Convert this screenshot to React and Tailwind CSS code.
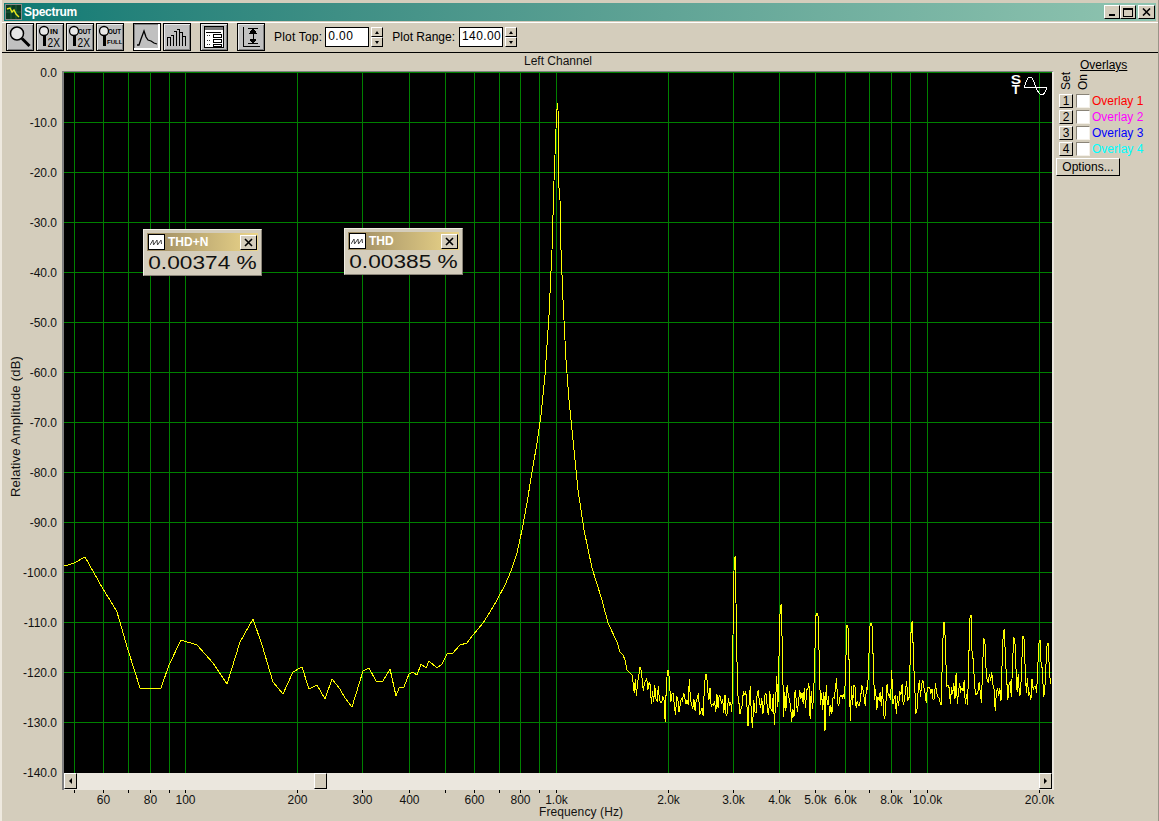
import React from "react";

const gridX = [74,103,128,150,169,185,297,362,409,445,474,499,520,539,556,668,733,779,815,845,869,891,910,927,1039];
const gridY = [72,122,172,222,272,322,372,422,472,522,572,622,672,722];
const yLabels = ["0.0","-10.0","-20.0","-30.0","-40.0","-50.0","-60.0","-70.0","-80.0","-90.0","-100.0","-110.0","-120.0","-130.0","-140.0"];
const xLabels = [[103,"60"],[150,"80"],[185,"100"],[297,"200"],[362,"300"],[409,"400"],[474,"600"],[520,"800"],[556,"1.0k"],[668,"2.0k"],[733,"3.0k"],[779,"4.0k"],[815,"5.0k"],[845,"6.0k"],[891,"8.0k"],[927,"10.0k"],[1039,"20.0k"]];

const lowTrace = [[64,565.5],[67,565.5],[75,562.5],[85,557],[103,589],[113,605],[117,612],[128,650],[140,688],[150,688],[161,688],[169,665],[181,640],[197,645],[213,663],[227,684],[240,642],[253,619],[262,645],[273,682],[283,694],[293,672],[302,667],[309,689],[317,685],[325,699],[332,679],[340,689],[345,698],[352,707],[363,671],[369,668],[376,681],[383,681],[390,669],[396,696],[399,688],[404,687],[409,674],[413,672],[417,675],[421,664],[426,668],[429,661],[437,668],[442,664],[447,654],[453,653],[460,645],[467,643],[473,635],[483,623],[490,612],[497,600],[505,585],[511,571],[517,553],[522,530],[527,503],[532,472],[537,443],[541,415],[545,375],[549,315],[552,250],[554,181],[555.5,142],[556.5,116],[557.5,103],[558,110],[558.5,140],[559,188],[560,200],[561,250],[563,300],[566,360],[569,400],[573,440],[578,490],[584,530],[592,568],[602,600],[608,623],[617,642],[620,652],[623,655],[625,660],[627,670],[632,675]];

const spikes = [[640,667],[668,668],[706,672],[735,556],[781,604],[817,613],[847,625],[871,623],[912,621],[944,620],[971,615],[984,638],[1004,629],[1014,637],[1023,636],[1040,640],[1048,643]];

function buildTrace() {
  let s = 48271;
  const rnd = () => { s = (s * 16807) % 2147483647; return s / 2147483647; };
  const pts = lowTrace.slice();
  const baseAt = (x) => {
    if (x < 668) return 684 + (x - 632) * 0.5;
    if (x < 730) return 704;
    if (x < 830) return 700;
    if (x < 960) return 698 - (x - 830) * 0.04;
    return 693 - (x - 960) * 0.05;
  };
  for (let x = 633; x < 1050.5; x += 1.15) {
    const b = baseAt(x);
    let y = b + (rnd() - 0.5) * 24;
    const r = rnd();
    if (r < 0.12) y += 8 + rnd() * 14;
    else if (r < 0.26) y -= 6 + rnd() * 12;
    for (const [sx, top] of spikes) {
      const d = Math.abs(x - sx);
      if (d < 1.2) y = Math.min(y, top + d * 3);
      else if (d < 2.4) y = Math.min(y, top + (b - top) * 0.55);
    }
    pts.push([Math.round(x * 10) / 10, Math.round(y)]);
  }
  return pts.map((p) => p.join(",")).join(" ");
}
const tracePoints = buildTrace();

const bevel = "border border-t-white border-l-white border-r-black border-b-black";

function ToolBtn({ children, pressed, className = "" }) {
  return (
    <button className={`block w-[28px] h-[28px] shrink-0 bg-[#c0c0c0] border border-black flex items-center justify-center p-0 ${pressed ? "shadow-[inset_-1px_-1px_0_#fff,inset_-2px_-2px_0_#fff,inset_1px_1px_0_#808080]" : "shadow-[inset_1px_1px_0_#e8e8e8,inset_-1px_-1px_0_#808080]"} ${className}`}>
      <svg width="26" height="26" viewBox="0 0 26 26" fill="none" stroke="#000" strokeWidth="1" shapeRendering="crispEdges">{children}</svg>
    </button>
  );
}

const smallGlass = (
  <g>
    <circle cx="7" cy="7" r="4.5" fill="#e8e8e8" stroke="#000" strokeWidth="1.3" shapeRendering="auto" />
    <rect x="6" y="11" width="3" height="11" fill="#000" stroke="none" />
  </g>
);
const tTxt = { fontFamily: "'Liberation Sans',sans-serif", stroke: "none", fill: "#000" };

function Spin() {
  return (
    <div className="w-[12px] h-[20px] flex flex-col shrink-0 ml-[2px] gap-0">
      {[0, 1].map((i) => (
        <div key={i} className="h-[10px] bg-[#d4cdbc] border-r border-b border-r-black border-b-black border-t border-l border-t-white border-l-white flex items-center justify-center">
          <div className={`w-0 h-0 border-x-[2px] border-x-transparent ${i === 0 ? "border-b-[3px] border-b-black" : "border-t-[3px] border-t-black"}`} />
        </div>
      ))}
    </div>
  );
}

function Meter({ title, value, className }) {
  return (
    <div className={`absolute w-[119px] h-[47px] bg-[#d4cdbc] border border-t-[#f0ece2] border-l-[#f0ece2] border-r-[#8a8478] border-b-[#8a8478] px-[3px] pt-[3px] ${className}`}>
      <div className="h-[18px] bg-gradient-to-r from-[#9c8a62] to-[#ecd68a] flex items-center pl-[1px] pr-[1px]">
        <div className="w-[17px] h-[16px] bg-white border border-black flex items-center justify-center shrink-0">
          <svg width="13" height="8" viewBox="0 0 13 8" fill="none" stroke="#444" strokeWidth="1"><path d="M0 7 L3 2 L3.5 7 L7 2 L7.5 7 L11 2 L11.5 6" /></svg>
        </div>
        <span className="ml-[3px] text-white font-bold text-[12px] leading-none flex-1">{title}</span>
        <div className={`w-[17px] h-[15px] bg-[#d4cdbc] ${bevel} flex items-center justify-center shrink-0`}>
          <svg width="9" height="9" viewBox="0 0 9 9" stroke="#000" strokeWidth="1.6"><path d="M1 1 L8 8 M8 1 L1 8" /></svg>
        </div>
      </div>
      <div className="text-[18px] leading-[25px] text-[#111] whitespace-nowrap pl-[1px] origin-left scale-x-[1.26]">{value}</div>
    </div>
  );
}

function OverlayRow({ n, label, color }) {
  return (
    <div className="flex items-center h-[14px] mb-[2px]">
      <button className={`w-[14px] h-[14px] p-0 bg-[#d4cdbc] ${bevel} text-[12px] leading-none flex items-center justify-center`}>{n}</button>
      <div className="ml-[3px] w-[14px] h-[14px] bg-white border border-t-[#8a8478] border-l-[#8a8478] border-r-[#f4f0e8] border-b-[#f4f0e8] shrink-0" />
      <span className={`ml-[2px] text-[12px] leading-none whitespace-nowrap ${color}`}>{label}</span>
    </div>
  );
}

export default function App() {
  return (
    <div className="w-[1159px] h-[821px] bg-[#d4cdbc] flex flex-col overflow-hidden font-['Liberation_Sans',Arial,sans-serif] text-black border-l-2 border-l-[#eee9df] border-r border-r-[#9a9488] box-border">
      {/* Title bar */}
      <div className="h-[18px] mt-[3px] ml-[2px] mr-[2px] bg-gradient-to-r from-[#0a7a74] to-[#8fc4b0] flex items-center shrink-0">
        <div className="w-[17px] h-[16px] ml-[1px] bg-[#0c3a22] border border-[#888] flex items-center justify-center">
          <svg width="15" height="14" viewBox="0 0 15 14" fill="none"><path d="M0 7 H15 M5 0 V14 M10 0 V14" stroke="#2a7a4a" strokeWidth="0.6" /><path d="M1 4 L4 3 L6 7 L8 5 L10 9 L13 12" stroke="#e8e820" strokeWidth="1.4" /></svg>
        </div>
        <span className="ml-[2px] text-white font-bold text-[12px] leading-none tracking-[-0.3px]">Spectrum</span>
        <div className="ml-auto flex items-center mr-[1px]">
          <div className={`w-[16px] h-[14px] bg-[#d4cdbc] ${bevel} flex items-end justify-center pb-[2px]`}><div className="w-[6px] h-[2px] bg-black" /></div>
          <div className={`w-[16px] h-[14px] bg-[#d4cdbc] ${bevel} flex items-center justify-center`}><div className="w-[10px] h-[9px] border border-black border-t-2" /></div>
          <div className={`ml-[2px] w-[17px] h-[14px] bg-[#d4cdbc] ${bevel} flex items-center justify-center`}>
            <svg width="9" height="8" viewBox="0 0 9 8" stroke="#000" strokeWidth="1.6"><path d="M1 0.5 L8 7.5 M8 0.5 L1 7.5" /></svg>
          </div>
        </div>
      </div>
      <div className="h-[1px] mt-[1px] bg-white shrink-0" />
      {/* Toolbar */}
      <div className="h-[29px] shrink-0 flex items-start pl-[4px] border-b border-black box-content">
        <div className="flex gap-[2px]">
          <ToolBtn>
            <circle cx="10" cy="9.5" r="6.5" fill="#e6e6e6" stroke="#000" strokeWidth="1.5" shapeRendering="auto" />
            <path d="M15 14.5 L22.5 22" stroke="#000" strokeWidth="3" shapeRendering="auto" />
          </ToolBtn>
          <ToolBtn>
            {smallGlass}
            <text x="13" y="10" fontSize="8" fontWeight="bold" style={tTxt}>IN</text>
            <text x="10.5" y="23" fontSize="12" textLength="12.5" lengthAdjust="spacingAndGlyphs" style={tTxt}>2X</text>
          </ToolBtn>
          <ToolBtn>
            {smallGlass}
            <text x="11" y="10" fontSize="7" fontWeight="bold" textLength="13" lengthAdjust="spacingAndGlyphs" style={tTxt}>OUT</text>
            <text x="10.5" y="23" fontSize="12" textLength="12.5" lengthAdjust="spacingAndGlyphs" style={tTxt}>2X</text>
          </ToolBtn>
          <ToolBtn>
            {smallGlass}
            <text x="11" y="10" fontSize="7" fontWeight="bold" textLength="13" lengthAdjust="spacingAndGlyphs" style={tTxt}>OUT</text>
            <text x="10" y="20" fontSize="6" fontWeight="bold" style={tTxt}>FULL</text>
          </ToolBtn>
        </div>
        <div className="flex gap-[2px] ml-[9px]">
          <ToolBtn pressed>
            <path d="M3 21 L5 21 L7 15 L10 7 L12 13 L14 16 L17 17 L20 19 L23 20" stroke="#000" strokeWidth="1.3" shapeRendering="auto" />
          </ToolBtn>
          <ToolBtn>
            <path d="M3.5 22 V13 H6.5 V22 M6.5 11 H9.5 V22 M9.5 7 H12.5 V22 M12.5 5 H15.5 V22 M15.5 8 H18.5 V22 M18.5 12 H21.5 V22" />
          </ToolBtn>
        </div>
        <ToolBtn className="ml-[9px]">
          <rect x="3.5" y="2.5" width="19" height="21" fill="#fff" stroke="#000" />
          <rect x="4" y="3" width="18" height="3" fill="#777" stroke="none" />
          <path d="M5 8.5 H20" />
          <rect x="12.5" y="10.5" width="8" height="3" fill="#fff" />
          <rect x="12.5" y="15.5" width="8" height="3" fill="#fff" />
          <rect x="12.5" y="20" width="8" height="2" fill="#fff" />
          <path d="M5.5 11.5 H10 M5.5 16.5 H10 M5.5 20.5 H10" stroke="#333" strokeDasharray="1 1" />
        </ToolBtn>
        <ToolBtn className="ml-[9px]">
          <path d="M5.5 3 V22 H22" strokeWidth="1" />
          <path d="M10 4.5 H20 M10 19.5 H20" />
          <path d="M15 4.5 V19.5" />
          <path d="M15 5 L12 9 H18 Z M15 19 L12 15 H18 Z" fill="#000" />
        </ToolBtn>
        <span className="ml-[9px] mt-[7px] text-[12px] leading-[14px] tracking-[0.2px] whitespace-nowrap">Plot Top:</span>
        <div className="ml-[3px] mt-[4px] w-[44px] h-[20px] bg-white border border-black text-[12px] leading-[17px] pl-[2px] tracking-[0.4px]">0.00</div>
        <div className="mt-[4px]"><Spin /></div>
        <span className="ml-[9px] mt-[7px] text-[12px] leading-[14px] whitespace-nowrap">Plot Range:</span>
        <div className="ml-[4px] mt-[4px] w-[44px] h-[20px] bg-white border border-black text-[12px] leading-[17px] pl-[2px] tracking-[0.4px]">140.00</div>
        <div className="mt-[4px]"><Spin /></div>
      </div>
      {/* Main */}
      <div className="flex flex-1 min-h-0">
        {/* Y axis */}
        <div className="w-[60px] shrink-0 flex">
          <div className="w-[21px] pl-[7px] pt-[307px]">
            <div className="[writing-mode:vertical-rl] rotate-180 text-[13px] leading-[13px] tracking-[0.23px] whitespace-nowrap h-[137px] text-[#111]">Relative Amplitude (dB)</div>
          </div>
          <div className="flex-1 flex flex-col gap-[36px] pt-[13px] items-end pr-[5px]">
            {yLabels.map((l) => (
              <div key={l} className="h-[14px] text-[12px] leading-[14px] text-[#111] whitespace-nowrap">{l}</div>
            ))}
          </div>
        </div>
        {/* Plot column */}
        <div className="w-[992px] shrink-0 flex flex-col">
          <div className="h-[18px] text-center text-[12px] leading-[16px] text-[#111]">Left Channel</div>
          <div className="border-t border-t-[#808080] border-l-2 border-l-[#808080] border-r-2 border-r-[#ebe7de] relative">
            <svg width="988" height="701" viewBox="64 72 988 701" className="block bg-black" shapeRendering="crispEdges">
              {gridX.map((x) => <line key={x} x1={x + 0.5} y1="72" x2={x + 0.5} y2="773" stroke="#008000" />)}
              {gridY.map((y) => <line key={y} x1="64" y1={y + 0.5} x2="1052" y2={y + 0.5} stroke="#008000" />)}
              <polyline points={tracePoints} fill="none" stroke="#ffff00" strokeWidth="1" />
              <path d="M1024 87.5 C1027 79 1028 77 1030 77 C1032 77 1033 79 1036 87.5 C1039 94 1040 95 1042 95 C1044 95 1045 93 1047 87.5 M1024 87.5 H1047" fill="none" stroke="#fff" strokeWidth="1" />
            </svg>
            {/* S T marker */}
            <div className="absolute left-[947px] top-[4px] w-[10px] flex flex-col items-center text-white font-bold">
              <span className="text-[12px] leading-[9px] h-[9px] scale-x-[1.3]">S</span>
              <span className="text-[12px] leading-[9px] h-[9px] mt-[1px] scale-x-[1.1]">T</span>
            </div>
            {/* Scrollbar */}
            <div className="h-[17px] bg-[#ebe7de] flex items-start">
              <div className={`w-[13px] h-[16px] bg-[#d4cdbc] ${bevel} flex items-center justify-center shrink-0`}>
                <div className="w-0 h-0 border-y-[3px] border-y-transparent border-r-[3px] border-r-black" />
              </div>
              <div className="w-[237px] shrink-0" />
              <div className={`w-[13px] h-[16px] bg-[#d4cdbc] ${bevel} shrink-0`} />
              <div className="flex-1" />
              <div className={`w-[13px] h-[16px] bg-[#d4cdbc] ${bevel} flex items-center justify-center shrink-0`}>
                <div className="w-0 h-0 border-y-[3px] border-y-transparent border-l-[3px] border-l-black" />
              </div>
            </div>
            {/* Meters */}
            <Meter title="THD+N" value="0.00374 %" className="left-[79px] top-[157px]" />
            <Meter title="THD" value="0.00385 %" className="left-[280px] top-[156px]" />
          </div>
          {/* X axis */}
          <div className="relative flex-1">
            {gridX.map((x) => (
              <div key={x} className="absolute top-0 w-px h-[3px] bg-black" style={{ left: x - 62 }} />
            ))}
            {xLabels.map(([x, l]) => (
              <div key={l} className="absolute top-[3px] text-[12px] leading-[14px] text-[#111] -translate-x-1/2 whitespace-nowrap" style={{ left: x - 62 + 0.5 }}>{l}</div>
            ))}
            <div className="absolute top-[15px] left-[477px] text-[12px] leading-[14px] tracking-[0.1px] text-[#111] whitespace-nowrap">Frequency (Hz)</div>
          </div>
        </div>
        {/* Overlays */}
        <div className="flex-1 pl-[2px] pt-[6px]">
          <div className="ml-[24px] text-[12px] leading-[13px] underline whitespace-nowrap">Overlays</div>
          <div className="flex ml-[3px] h-[18px]">
            <div className="w-[14px] flex justify-center"><span className="[writing-mode:vertical-rl] rotate-180 text-[12px] leading-[12px]">Set</span></div>
            <div className="ml-[3px] w-[14px] flex justify-center"><span className="[writing-mode:vertical-rl] rotate-180 text-[12px] leading-[12px]">On</span></div>
          </div>
          <div className="ml-[3px] mt-[4px]">
            <OverlayRow n="1" label="Overlay 1" color="text-[#ff0000]" />
            <OverlayRow n="2" label="Overlay 2" color="text-[#ff00ff]" />
            <OverlayRow n="3" label="Overlay 3" color="text-[#0000ff]" />
            <OverlayRow n="4" label="Overlay 4" color="text-[#00ffff]" />
          </div>
          <button className={`block w-[64px] h-[18px] p-0 bg-[#d4cdbc] ${bevel} text-[12px] leading-none text-center`}>Options...</button>
        </div>
      </div>
    </div>
  );
}
